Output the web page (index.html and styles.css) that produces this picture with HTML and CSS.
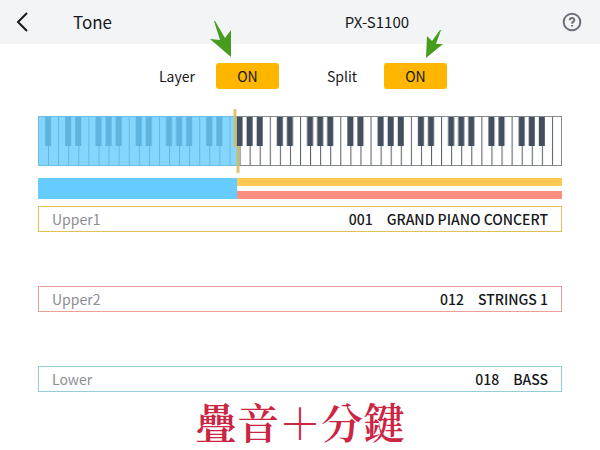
FILE: index.html
```
<!DOCTYPE html>
<html lang="zh-Hant">
<head>
	<meta charset="UTF-8">
	<meta name="viewport" content="width=device-width, initial-scale=1">
	<title>Tone</title>
	<link rel="stylesheet" href="styles.css">
</head>
<body>

<header class="topbar">
	<button type="button" class="back" aria-label="Back">
		<svg width="12" height="20" viewBox="0 0 12 20"><path d="M11 1L2 10L11 19"/></svg>
	</button>
	<h1>Tone</h1>
	<span class="device">PX-S1100</span>
	<button type="button" class="help" aria-label="Help">
		<svg width="20" height="20" viewBox="0 0 20 20">
			<circle cx="10" cy="10" r="8.3"/>
			<path d="M7.8 8.2C7.8 5.2 12.3 5.3 12.3 8C12.3 9.7 10.1 9.6 10.1 11.7M10.1 13V14.6"/>
		</svg>
	</button>
</header>

<main>
	<div class="switches">
		<div class="switch">
			<label for="layer">Layer</label>
			<button type="button" id="layer" aria-pressed="true">ON</button>
			<svg class="arrow arrow-layer" width="22" height="37" viewBox="0 0 22 37"><path d="M4 0H5L15 17L21 9V36L0 18L10 19Z"/></svg>
		</div>
		<div class="switch">
			<label for="split">Split</label>
			<button type="button" id="split" aria-pressed="true">ON</button>
			<svg class="arrow arrow-split" width="18" height="28" viewBox="0 0 18 28"><path d="M15 0L10 14L17 14L0 28L1 6L6 11L14 0Z"/></svg>
		</div>
	</div>

	<!-- 88 keys: 52 white keys, 10 units each -->
	<svg class="keyboard" viewBox="0 0 520 50" preserveAspectRatio="none">
		<defs>
			<pattern id="white" width="10" height="50" patternUnits="userSpaceOnUse">
				<rect class="line" x="0" width="1" height="50"/>
			</pattern>
			<!-- one octave, starting from C -->
			<pattern id="black" x="20" width="70" height="50" patternUnits="userSpaceOnUse">
				<rect x="7" width="6" height="30"/>
				<rect x="17" width="6" height="30"/>
				<rect x="37" width="6" height="30"/>
				<rect x="47" width="6" height="30"/>
				<rect x="57" width="6" height="30"/>
			</pattern>
		</defs>
		<rect width="520" height="50" fill="url(#white)"/>
		<rect x="5" width="510" height="30" fill="url(#black)"/>
		<rect class="frame" x="0.5" y="0.5" width="519" height="49"/>
		<path class="lower-area" d="M0 0H197V30H200V50H0Z"/>
		<path class="split-mark" d="M194 -7H197V31H194ZM197 30H200V57H197Z"/>
	</svg>

	<div class="zones">
		<div class="zone-lower"></div>
		<div class="zone-upper">
			<div class="bar1"></div>
			<div class="bar2"></div>
		</div>
	</div>

	<div class="parts">
		<button type="button" class="part upper1">
			<span class="name">Upper1</span><span>001</span><span>GRAND PIANO CONCERT</span>
		</button>
		<button type="button" class="part upper2">
			<span class="name">Upper2</span><span>012</span><span>STRINGS 1</span>
		</button>
		<button type="button" class="part lower">
			<span class="name">Lower</span><span>018</span><span>BASS</span>
		</button>
	</div>

	<p class="caption">疊音＋分鍵</p>
</main>

</body>
</html>
```
FILE: styles.css
```
* {
	box-sizing: border-box;
}
body {
	margin: 0;
	background-color: #fff;
	color: #16181b;
	font-family: "Noto Sans CJK TC", "Noto Sans", sans-serif;
	font-size: 14px;
	line-height: 20px;
}
button {
	padding: 0;
	border: 0;
	background: none;
	color: inherit;
	font: inherit;
	cursor: pointer;
}
svg {
	display: block;
}

/* top bar */
.topbar {
	display: grid;
	grid-template-columns: 57px 48% 1fr 20px;
	align-items: center;
	height: 44px;
	padding: 0 18px 0 16px;
	background-color: #f3f4f6;
}
.topbar h1 {
	margin: 0;
	font-size: 17px;
	font-weight: 400;
}
.device {
	font-size: 15px;
}
.back path {
	fill: none;
	stroke: #16181b;
	stroke-width: 2;
}
.help circle,
.help path {
	fill: none;
	stroke: #6b727b;
	stroke-width: 2;
}

main {
	padding: 0 38px;
}

/* layer / split */
.switches {
	display: flex;
	justify-content: center;
	gap: 48px;
	padding: 19px 0 27px 6px;
}
.switch {
	display: flex;
	align-items: center;
	gap: 20px;
	position: relative;
}
.switch label {
	min-width: 37px;
}
.switch button {
	width: 63px;
	height: 26px;
	border-radius: 3px;
	background-color: #ffb600;
}
.arrow {
	position: absolute;
	bottom: 31px;
	fill: #469c1c;
}
.arrow-layer {
	right: 47px;
}
.arrow-split {
	right: 3px;
}

/* keyboard */
.keyboard {
	width: 100%;
	height: 50px;
	overflow: visible;
}
.line {
	fill: #555b66;
}
#black rect {
	fill: #434f5f;
}
.frame {
	fill: none;
	stroke: #85888e;
}
.lower-area {
	fill: #66ccff;
	fill-opacity: 0.8;
}
.split-mark {
	fill: #d9b64c;
	fill-opacity: 0.8;
}

.zones {
	display: flex;
	height: 21px;
	margin-top: 12px;
}
.zone-lower {
	width: 38%;
	background-color: #66ccff;
}
.zone-upper {
	flex: 1;
	display: flex;
	flex-direction: column;
	justify-content: space-between;
}
.bar1,
.bar2 {
	height: 8px;
}
.bar1 {
	background-color: #ffc852;
}
.bar2 {
	background-color: #fa8f80;
}

/* parts */
.parts {
	display: flex;
	flex-direction: column;
	gap: 54px;
	margin-top: 7px;
}
.part {
	display: flex;
	align-items: center;
	gap: 14px;
	height: 26px;
	padding: 0 13px;
	border: 1px solid;
	font-weight: 500;
}
.part .name {
	margin-right: auto;
	color: #8b8e93;
	font-weight: 400;
}
.upper1 {
	border-color: #e3bf58;
}
.upper2 {
	border-color: #eba097;
}
.lower {
	border-color: #93cdd8;
}

.caption {
	margin: 0;
	color: #cb2543;
	font-family: "Noto Serif CJK TC", "Noto Sans CJK TC", serif;
	font-size: 42px;
	font-weight: 600;
	line-height: 58px;
	text-align: center;
}
```
